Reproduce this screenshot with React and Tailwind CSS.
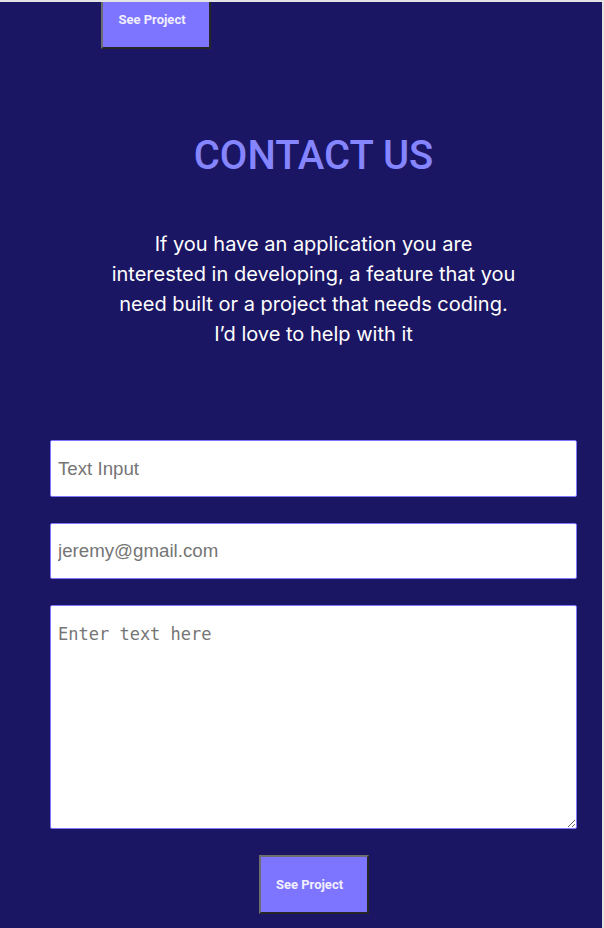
import React, { useState } from "react";

const Btn = () => (
  <button
    type="button"
    className="w-[110px] h-[59px] pr-[8px] bg-[#7d75ff] text-[#f1efff] text-[13px] font-bold font-['Roboto',sans-serif] border-2 border-t-[#6e6e6e] border-l-[#6e6e6e] border-r-[#262626] border-b-[#262626]"
  >
    See Project
  </button>
);

const field =
  "w-full bg-white border border-[#7f78ff] rounded-[2px] px-[7px] placeholder:text-[#757575] outline-none";

export default function App() {
  const [form, setForm] = useState({ name: "", email: "", message: "" });

  const onChange = (e) => {
    const { name, value } = e.target;
    setForm((p) => ({ ...p, [name]: value }));
  };

  return (
    <div className="w-[604px] h-[928px] overflow-hidden bg-[#1b1663] border-t-2 border-r-2 border-[#e4e4e4] flex flex-col">
      {/* top button, cut off by scroll */}
      <div className="-mt-[12px] pl-[101px]">
        <Btn />
      </div>

      <h2 className="mt-[87px] pl-[25px] text-center text-[40px] leading-none font-medium text-[#8585ff] font-['Roboto',sans-serif]">
        CONTACT US
      </h2>

      <div className="mt-[53px] pl-[25px] flex justify-center">
        <p className="w-[410px] text-center text-[20px] leading-[30px] text-white font-['Inter',sans-serif]">
          If you have an application you are interested in developing, a feature that you need built or a project that needs coding. I’d love to help with it
        </p>
      </div>

      <form
        className="mt-[91px] pl-[50px] pr-[25px] flex flex-col gap-[26px]"
        onSubmit={(e) => e.preventDefault()}
      >
        <input
          name="name"
          value={form.name}
          onChange={onChange}
          placeholder="Text Input"
          className={`${field} h-[57px] text-[18.7px] font-['Arial','Liberation_Sans',sans-serif]`}
        />
        <input
          name="email"
          value={form.email}
          onChange={onChange}
          placeholder="jeremy@gmail.com"
          className={`${field} h-[56px] text-[18.7px] font-['Arial','Liberation_Sans',sans-serif]`}
        />
        <textarea
          name="message"
          value={form.message}
          onChange={onChange}
          placeholder="Enter text here"
          className={`${field} h-[224px] pt-[16px] text-[17px] font-['DejaVu_Sans_Mono',monospace]`}
        />
        <div className="flex justify-center">
          <Btn />
        </div>
      </form>
    </div>
  );
}
